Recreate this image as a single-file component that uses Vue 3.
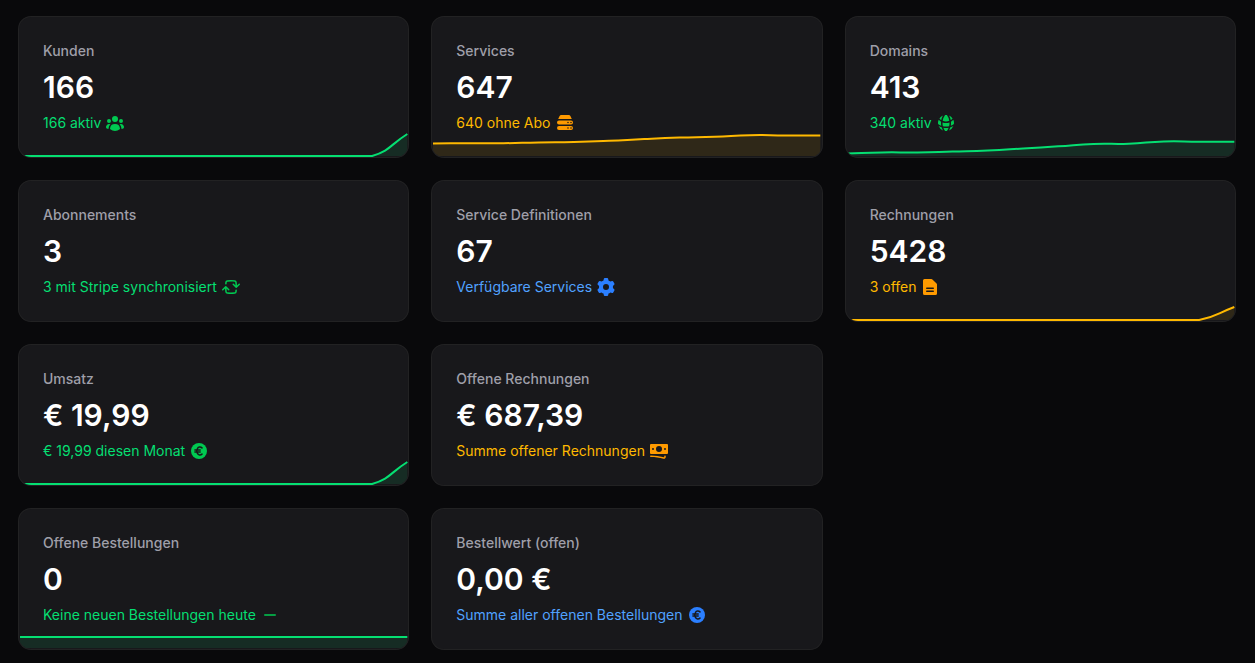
<script setup>
const icons = {
  users: 'M10 9a3 3 0 1 0 0-6 3 3 0 0 0 0 6ZM6 8a2 2 0 1 1-4 0 2 2 0 0 1 4 0ZM1.49 15.326a.78.78 0 0 1-.358-.442 3 3 0 0 1 4.308-3.516 6.484 6.484 0 0 0-1.905 3.959c-.023.222-.014.442.025.654a4.97 4.97 0 0 1-2.07-.655ZM16.44 15.98a4.97 4.97 0 0 0 2.07-.654.78.78 0 0 0 .357-.442 3 3 0 0 0-4.308-3.517 6.484 6.484 0 0 1 1.907 3.96 2.32 2.32 0 0 1-.026.654ZM18 8a2 2 0 1 1-4 0 2 2 0 0 1 4 0ZM5.304 16.19a.844.844 0 0 1-.277-.71 5 5 0 0 1 9.947 0 .843.843 0 0 1-.277.71A6.975 6.975 0 0 1 10 18a6.974 6.974 0 0 1-4.696-1.81Z',
  server: 'M4.464 3.162A2 2 0 0 1 6.28 2h7.44a2 2 0 0 1 1.816 1.162l1.154 2.5c.067.145.115.291.145.438A3.508 3.508 0 0 0 16 6H4c-.288 0-.568.035-.835.1.03-.147.078-.293.145-.438l1.154-2.5ZM2 9.5a2 2 0 0 1 2-2h12a2 2 0 1 1 0 4H4a2 2 0 0 1-2-2Zm13.24 0a.75.75 0 0 1 .75-.75H16a.75.75 0 0 1 .75.75v.01a.75.75 0 0 1-.75.75h-.01a.75.75 0 0 1-.75-.75V9.5Zm-2.25-.75a.75.75 0 0 0-.75.75v.01c0 .414.336.75.75.75H13a.75.75 0 0 0 .75-.75V9.5a.75.75 0 0 0-.75-.75h-.01ZM2 15a2 2 0 0 1 2-2h12a2 2 0 1 1 0 4H4a2 2 0 0 1-2-2Zm13.24 0a.75.75 0 0 1 .75-.75H16a.75.75 0 0 1 .75.75v.01a.75.75 0 0 1-.75.75h-.01a.75.75 0 0 1-.75-.75V15Zm-2.25-.75a.75.75 0 0 0-.75.75v.01c0 .414.336.75.75.75H13a.75.75 0 0 0 .75-.75V15a.75.75 0 0 0-.75-.75h-.01Z',
  globe: 'M16.555 5.412a8.028 8.028 0 0 0-3.503-2.81 14.899 14.899 0 0 1 1.663 4.472 8.547 8.547 0 0 0 1.84-1.662ZM13.326 7.825a13.43 13.43 0 0 0-2.413-5.773 8.087 8.087 0 0 0-1.826 0 13.43 13.43 0 0 0-2.413 5.773A8.473 8.473 0 0 0 10 8.5c1.18 0 2.304-.24 3.326-.675ZM6.514 9.376A9.98 9.98 0 0 0 10 10c1.226 0 2.4-.22 3.486-.624a13.54 13.54 0 0 1-.351 3.759A13.54 13.54 0 0 1 10 13.5c-1.079 0-2.128-.127-3.134-.366a13.538 13.538 0 0 1-.352-3.758ZM5.285 7.074a14.9 14.9 0 0 1 1.663-4.471 8.028 8.028 0 0 0-3.503 2.81c.529.638 1.149 1.199 1.84 1.66ZM17.334 6.798a7.973 7.973 0 0 1 .614 4.115 13.47 13.47 0 0 1-3.178 1.72 15.093 15.093 0 0 0 .174-3.939 10.043 10.043 0 0 0 2.39-1.896ZM2.666 6.798a10.042 10.042 0 0 0 2.39 1.896 15.196 15.196 0 0 0 .174 3.94 13.472 13.472 0 0 1-3.178-1.72 7.973 7.973 0 0 1 .615-4.115ZM10 15c.898 0 1.778-.079 2.633-.23a13.473 13.473 0 0 1-1.72 3.178 8.099 8.099 0 0 1-1.826 0 13.47 13.47 0 0 1-1.72-3.178c.855.151 1.735.23 2.633.23ZM14.357 14.357a14.912 14.912 0 0 1-1.305 3.04 8.027 8.027 0 0 0 4.345-4.345c-.953.542-1.971.981-3.04 1.305ZM6.948 17.397a8.027 8.027 0 0 1-4.345-4.345c.953.542 1.971.981 3.04 1.305a14.912 14.912 0 0 0 1.305 3.04Z',
  sync: 'M10 4.5c1.215 0 2.417.055 3.604.162a.68.68 0 0 1 .615.597c.124 1.038.208 2.088.25 3.15l-1.689-1.69a.75.75 0 0 0-1.06 1.061l2.999 3a.75.75 0 0 0 1.06 0l3.001-3a.75.75 0 1 0-1.06-1.06l-1.748 1.747a41.31 41.31 0 0 0-.264-3.386 2.18 2.18 0 0 0-1.97-1.913 41.512 41.512 0 0 0-7.477 0 2.18 2.18 0 0 0-1.969 1.913 41.16 41.16 0 0 0-.16 1.61.75.75 0 1 0 1.495.12c.041-.52.093-1.038.154-1.552a.68.68 0 0 1 .615-.597A40.012 40.012 0 0 1 10 4.5ZM5.281 9.22a.75.75 0 0 0-1.06 0l-3.001 3a.75.75 0 1 0 1.06 1.06l1.748-1.747c.042 1.141.13 2.27.264 3.386a2.18 2.18 0 0 0 1.97 1.913 41.533 41.533 0 0 0 7.477 0 2.18 2.18 0 0 0 1.969-1.913c.064-.534.117-1.071.16-1.61a.75.75 0 1 0-1.495-.12c-.041.52-.093 1.037-.154 1.552a.68.68 0 0 1-.615.597 40.013 40.013 0 0 1-7.208 0 .68.68 0 0 1-.615-.597 39.785 39.785 0 0 1-.25-3.15l1.689 1.69a.75.75 0 0 0 1.06-1.061l-2.999-3Z',
  cog: 'M7.84 1.804A1 1 0 0 1 8.82 1h2.36a1 1 0 0 1 .98.804l.331 1.652a6.993 6.993 0 0 1 1.929 1.115l1.598-.54a1 1 0 0 1 1.186.447l1.18 2.044a1 1 0 0 1-.205 1.251l-1.267 1.113a7.047 7.047 0 0 1 0 2.228l1.267 1.113a1 1 0 0 1 .206 1.25l-1.18 2.045a1 1 0 0 1-1.187.447l-1.598-.54a6.993 6.993 0 0 1-1.929 1.115l-.33 1.652a1 1 0 0 1-.98.804H8.82a1 1 0 0 1-.98-.804l-.331-1.652a6.993 6.993 0 0 1-1.929-1.115l-1.598.54a1 1 0 0 1-1.186-.447l-1.18-2.044a1 1 0 0 1 .205-1.251l1.267-1.114a7.05 7.05 0 0 1 0-2.227L1.821 7.773a1 1 0 0 1-.206-1.25l1.18-2.045a1 1 0 0 1 1.187-.447l1.598.54A6.992 6.992 0 0 1 7.51 3.456l.33-1.652ZM10 13a3 3 0 1 0 0-6 3 3 0 0 0 0 6Z',
  document: 'M4.5 2A1.5 1.5 0 0 0 3 3.5v13A1.5 1.5 0 0 0 4.5 18h11a1.5 1.5 0 0 0 1.5-1.5V7.621a1.5 1.5 0 0 0-.44-1.06l-4.12-4.122A1.5 1.5 0 0 0 11.378 2H4.5Zm2.25 8.5a.75.75 0 0 0 0 1.5h6.5a.75.75 0 0 0 0-1.5h-6.5Zm0 3a.75.75 0 0 0 0 1.5h6.5a.75.75 0 0 0 0-1.5h-6.5Z',
  euro: 'M10 18a8 8 0 1 0 0-16 8 8 0 0 0 0 16Z',
  banknotes: 'M1 4a1 1 0 0 1 1-1h16a1 1 0 0 1 1 1v8a1 1 0 0 1-1 1H2a1 1 0 0 1-1-1V4Zm12 4a3 3 0 1 1-6 0 3 3 0 0 1 6 0ZM4 9a1 1 0 1 0 0-2 1 1 0 0 0 0 2Zm13-1a1 1 0 1 1-2 0 1 1 0 0 1 2 0ZM1.75 14.5a.75.75 0 0 0 0 1.5c4.417 0 8.693.603 12.749 1.73 1.111.309 2.251-.512 2.251-1.696v-.784a.75.75 0 0 0-1.5 0v.784a.272.272 0 0 1-.35.25A49.043 49.043 0 0 0 1.75 14.5Z',
  minus: 'M4 10a.75.75 0 0 1 .75-.75h10.5a.75.75 0 0 1 0 1.5H4.75A.75.75 0 0 1 4 10Z',
}

const W = 388
const H = 22

// chart values are heights above the baseline, 0 to 22
const spike = [0, 0, 0, 0, 0, 0, 0, 0, 0, 0, 0, 22]
const spikeLow = [0, 0, 0, 0, 0, 0, 0, 0, 0, 0, 0, 13]

const stats = [
  { label: 'Kunden', value: '166', text: '166 aktiv', icon: 'users', color: 'success', chart: spike },
  { label: 'Services', value: '647', text: '640 ohne Abo', icon: 'server', color: 'warning', chart: [12.4, 12.8, 12.8, 13.6, 14, 15.2, 17, 18.4, 19.2, 20.8, 20.6, 20.6] },
  { label: 'Domains', value: '413', text: '340 aktiv', icon: 'globe', color: 'success', chart: [2.4, 3.6, 3.6, 4.5, 5.5, 7.5, 9.7, 12.1, 12.3, 14.6, 14.3, 14.3] },
  { label: 'Abonnements', value: '3', text: '3 mit Stripe synchronisiert', icon: 'sync', color: 'success' },
  { label: 'Service Definitionen', value: '67', text: 'Verfügbare Services', icon: 'cog', color: 'info' },
  { label: 'Rechnungen', value: '5428', text: '3 offen', icon: 'document', color: 'warning', chart: spikeLow },
  { label: 'Umsatz', value: '€ 19,99', text: '€ 19,99 diesen Monat', icon: 'euro', color: 'success', chart: spike },
  { label: 'Offene Rechnungen', value: '€ 687,39', text: 'Summe offener Rechnungen', icon: 'banknotes', color: 'warning' },
  { label: 'Offene Bestellungen', value: '0', text: 'Keine neuen Bestellungen heute', icon: 'minus', color: 'success', chart: [11, 11], newRow: true },
  { label: 'Bestellwert (offen)', value: '0,00 €', text: 'Summe aller offenen Bestellungen', icon: 'euro', color: 'info' },
]

const clamp = (y) => Math.min(H, Math.max(0, y))

// smooth curve through all points, handles kept inside the chart area
function linePath(values) {
  const step = W / (values.length - 1)
  const pts = values.map((v, i) => ({ x: i * step, y: H - v }))
  const handles = pts.map((p, i) => {
    const prev = pts[i - 1] || p
    const next = pts[i + 1] || p
    const a = Math.hypot(p.x - prev.x, p.y - prev.y)
    const b = Math.hypot(next.x - p.x, next.y - p.y)
    const fa = (0.5 * a) / (a + b)
    const fb = (0.5 * b) / (a + b)
    const dx = next.x - prev.x
    const dy = next.y - prev.y
    return {
      inX: p.x - fa * dx,
      inY: clamp(p.y - fa * dy),
      outX: p.x + fb * dx,
      outY: clamp(p.y + fb * dy),
    }
  })
  let d = `M${pts[0].x} ${pts[0].y}`
  for (let i = 1; i < pts.length; i++) {
    const from = handles[i - 1]
    const to = handles[i]
    d += `C${from.outX} ${from.outY} ${to.inX} ${to.inY} ${pts[i].x} ${pts[i].y}`
  }
  return d
}

function areaPath(values) {
  return `${linePath(values)}V${H}H0Z`
}
</script>

<template>
  <main class="stats">
    <section
      v-for="stat in stats"
      :key="stat.label"
      class="stat"
      :class="[stat.color, { 'new-row': stat.newRow }]"
    >
      <div class="label">{{ stat.label }}</div>
      <div class="value">{{ stat.value }}</div>
      <div class="description">
        <span>{{ stat.text }}</span>
        <svg class="icon" viewBox="0 0 20 20" aria-hidden="true">
          <path :d="icons[stat.icon]" fill="currentColor" fill-rule="evenodd" clip-rule="evenodd" />
          <path
            v-if="stat.icon === 'euro'"
            class="euro-mark"
            d="M13 6.9C11.6 5.5 9.4 5.7 8.4 7.6C7.6 9 7.6 11 8.4 12.4C9.4 14.3 11.6 14.5 13 13.1M5.9 9H11.2M5.9 11H11.2"
          />
        </svg>
      </div>
      <div v-if="stat.chart" class="chart">
        <svg :viewBox="`0 0 ${W} ${H}`" preserveAspectRatio="none" aria-hidden="true">
          <path class="area" :d="areaPath(stat.chart)" />
          <path class="line" :d="linePath(stat.chart)" />
        </svg>
      </div>
    </section>
  </main>
</template>

<style>
body {
  margin: 0;
  background: #09090b;
}
</style>

<style scoped>
.stats {
  display: grid;
  grid-template-columns: repeat(3, minmax(0, 1fr));
  gap: 24px;
  padding: 17px 20px 13px 19px;
  font-family: Inter, 'Liberation Sans', sans-serif;
}

.stat {
  position: relative;
  display: grid;
  gap: 8px;
  padding: 24px;
  border-radius: 12px;
  background: #18181b;
  box-shadow: 0 0 0 1px rgba(255, 255, 255, 0.1);
}

.new-row {
  grid-column-start: 1;
}

.label {
  font-size: 14px;
  line-height: 20px;
  font-weight: 500;
  color: #9f9fa9;
}

.value {
  font-size: 30px;
  line-height: 36px;
  font-weight: 600;
  color: #fff;
}

.description {
  display: flex;
  align-items: center;
  gap: 4px;
  font-size: 14px;
  line-height: 20px;
  color: var(--tone);
}

.icon {
  flex: none;
  width: 20px;
  height: 20px;
  color: var(--icon);
}

.euro-mark {
  fill: none;
  stroke: #18181b;
  stroke-width: 1.5;
  stroke-linecap: round;
}

/* sits on the lower edge of the card */
.chart {
  position: absolute;
  inset: auto 0 0;
  padding: 1px;
  overflow: hidden;
  border-radius: 0 0 12px 12px;
}

.chart svg {
  display: block;
  width: 100%;
  height: 22px;
  overflow: visible;
}

.area {
  fill: var(--tone);
  fill-opacity: 0.1;
}

.line {
  fill: none;
  stroke: var(--tone);
  stroke-width: 2;
  vector-effect: non-scaling-stroke;
}

.success {
  --tone: #05df72;
  --icon: #00c951;
}

.warning {
  --tone: #ffb900;
  --icon: #fe9a00;
}

.info {
  --tone: #51a2ff;
  --icon: #2b7fff;
}
</style>
